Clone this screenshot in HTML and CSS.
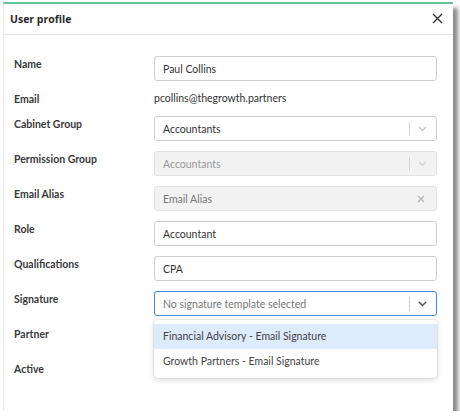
FILE: index.html
```html
<!DOCTYPE html>
<html lang="en">
<head>
    <meta charset="UTF-8">
    <meta name="viewport" content="width=device-width, initial-scale=1.0">
    <title>User profile</title>
    <link rel="stylesheet" href="styles.css">
</head>
<body>
    <div class="modal">
        <div class="modal-header">
            <h2>User profile</h2>
            <span class="close">
                <svg width="11" height="11" viewBox="0 0 11 11"><path d="M1 1L10 10M10 1L1 10" stroke="#333" stroke-width="1.4"/></svg>
            </span>
        </div>
        <form class="modal-body">
            <label>Name</label>
            <div class="field">Paul Collins</div>

            <label class="short">Email</label>
            <div class="plain">pcollins@thegrowth.partners</div>

            <label>Cabinet Group</label>
            <div class="field select">
                <span>Accountants</span>
                <span class="sep"></span>
                <svg class="chev" width="9" height="6" viewBox="0 0 9 6"><path d="M1 1L4.5 4.5L8 1" fill="none" stroke="#c4c4c4" stroke-width="1.2"/></svg>
            </div>

            <label>Permission Group</label>
            <div class="field select disabled">
                <span>Accountants</span>
                <span class="sep"></span>
                <svg class="chev" width="9" height="6" viewBox="0 0 9 6"><path d="M1 1L4.5 4.5L8 1" fill="none" stroke="#d0d0d0" stroke-width="1.2"/></svg>
            </div>

            <label>Email Alias</label>
            <div class="field disabled alias">
                <span>Email Alias</span>
                <svg width="8" height="8" viewBox="0 0 8 8"><path d="M1 1L7 7M7 1L1 7" stroke="#b5b5b5" stroke-width="1.3"/></svg>
            </div>

            <label>Role</label>
            <div class="field">Accountant</div>

            <label>Qualifications</label>
            <div class="field">CPA</div>

            <label>Signature</label>
            <div class="sig-wrap">
                <div class="field select focused">
                    <span class="placeholder">No signature template selected</span>
                    <span class="sep"></span>
                    <svg class="chev" width="9" height="6" viewBox="0 0 9 6"><path d="M1 1L4.5 4.5L8 1" fill="none" stroke="#555" stroke-width="1.4"/></svg>
                </div>
                <ul class="menu">
                    <li class="active">Financial Advisory - Email Signature</li>
                    <li>Growth Partners - Email Signature</li>
                </ul>
            </div>

            <label>Partner</label>
            <div class="empty"></div>

            <label>Active</label>
            <div class="empty"></div>
        </form>
    </div>
</body>
</html>
```

FILE: styles.css
```css
body {
    font-family: 'Lato', sans-serif;
    font-size: 10.5px;
    color: #333;
    margin: 0;
    padding: 0;
    background-color: #fff;
}

.modal {
    margin: 2px 0 0 3px;
    width: 449px;
    background: #fff;
    border-top: 2px solid #6cc49b;
    border-left: 1px solid #e8e8e8;
    box-shadow: 5px 6px 4px rgba(0, 0, 0, 0.45);
}

.modal-header {
    display: flex;
    justify-content: space-between;
    align-items: center;
    height: 29px;
    padding: 0 10px 1px 6px;
    border-bottom: 1px solid #e6e6e6;
}

.modal-header h2 {
    margin: 0;
    font-family: 'Open Sans', sans-serif;
    font-size: 10.5px;
    font-weight: 700;
    color: #2a2a2a;
}

.close {
    display: flex;
    cursor: pointer;
}

.modal-body {
    display: grid;
    grid-template-columns: 140px 1fr;
    row-gap: 10px;
    padding: 21px 16px 25px 10px;
}

.modal-body label {
    font-weight: 700;
    padding-top: 2px;
    color: #3a3a3a;
}

.field {
    display: flex;
    align-items: center;
    height: 23px;
    padding: 0 8px;
    border: 1px solid #cfcfcf;
    border-radius: 3px;
    background: #fff;
}

.plain {
    height: 16px;
    line-height: 16px;
    margin-top: -1px;
}

.select span:first-child,
.alias span {
    flex: 1;
}

.sep {
    width: 1px;
    height: 14px;
    background: #d6d6d6;
    margin-right: 8px;
}

.chev {
    margin-right: 1px;
}

.disabled {
    background: #f2f2f2;
    border-color: #e2e2e2;
    color: #999;
}

.alias {
    color: #777;
    padding-right: 11px;
}

.sig-wrap {
    position: relative;
}

.focused {
    border-color: #3f8ae0;
}

.placeholder {
    color: #777;
}

.focused .sep {
    background: #c8c8c8;
}

.menu {
    position: absolute;
    top: 29px;
    left: 0;
    right: 0;
    margin: 0;
    padding: 4px 0;
    list-style: none;
    background: #fff;
    border-radius: 4px;
    box-shadow: 0 0 0 1px rgba(0, 0, 0, 0.06), 0 2px 6px rgba(0, 0, 0, 0.15);
    z-index: 2;
}

.menu li {
    height: 25px;
    line-height: 25px;
    padding: 0 9px;
    color: #444;
}

.menu li.active {
    background: #deebfc;
}

.empty {
    height: 25px;
}
```
